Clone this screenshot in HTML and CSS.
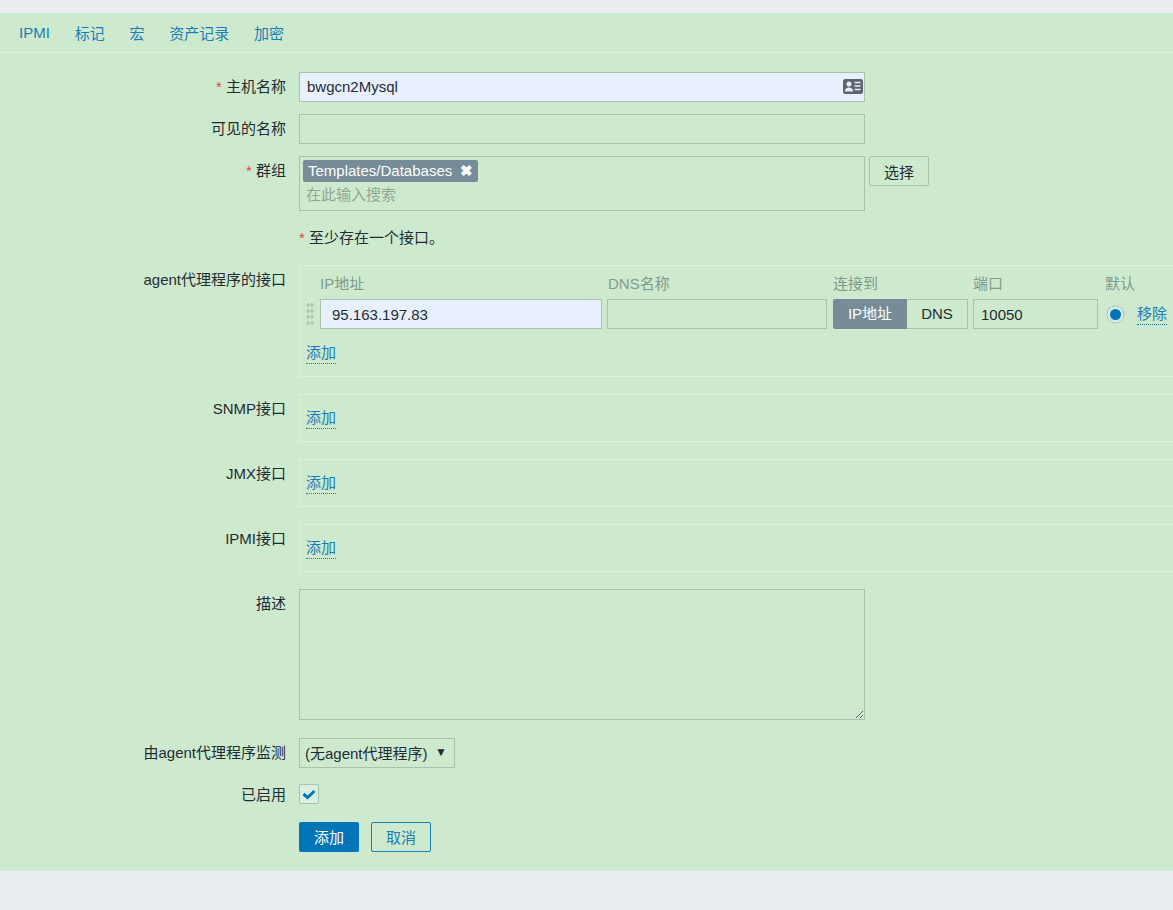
FILE: index.html
```html
<!DOCTYPE html>
<html lang="en">
<head>
  <meta charset="UTF-8">
  <title>Host</title>
  <link rel="stylesheet" href="styles.css">
</head>
<body>
<div class="panel">
  <ul class="tabs">
    <li><a href="#">IPMI</a></li>
    <li><a href="#">标记</a></li>
    <li><a href="#">宏</a></li>
    <li><a href="#">资产记录</a></li>
    <li><a href="#">加密</a></li>
  </ul>
  <form class="form">
    <div class="row">
      <label class="lbl"><span class="req">*</span> 主机名称</label>
      <div class="field-wrap">
        <input class="txt filled wide" type="text" value="bwgcn2Mysql">
        <svg class="card-icon" width="20" height="15" viewBox="0 0 20 15">
          <rect width="20" height="15" rx="2.5" fill="#5c6470"/>
          <circle cx="6" cy="5" r="2.5" fill="#e8effd"/>
          <path d="M2 12.5c0-3 1.500-4 4-4s4 1 4 4z" fill="#e8effd"/>
          <path d="M11.500 3.500h6M11.500 7h6M11.500 10.500h6" stroke="#e8effd" stroke-width="1.600"/>
        </svg>
      </div>
    </div>
    <div class="row">
      <label class="lbl">可见的名称</label>
      <input class="txt wide" type="text">
    </div>
    <div class="row">
      <label class="lbl"><span class="req">*</span> 群组</label>
      <div class="multi">
        <span class="tag">Templates/Databases <b class="tag-x">✖</b></span>
        <span class="placeholder">在此输入搜索</span>
      </div>
      <button class="btn-grey" type="button">选择</button>
    </div>
    <div class="row row-note">
      <label class="lbl"></label>
      <div class="note"><span class="req">*</span> 至少存在一个接口。</div>
    </div>
    <div class="row row-iface">
      <label class="lbl">agent代理程序的接口</label>
      <div class="box box-agent">
        <div class="iface-head">
          <span class="col-ip">IP地址</span>
          <span class="col-dns">DNS名称</span>
          <span class="col-conn">连接到</span>
          <span class="col-port">端口</span>
          <span>默认</span>
        </div>
        <div class="iface-row">
          <span class="grip"></span>
          <input class="txt filled ip" type="text" value="95.163.197.83">
          <input class="txt dns" type="text">
          <div class="seg"><span class="seg-on">IP地址</span><span class="seg-off">DNS</span></div>
          <input class="txt port" type="text" value="10050">
          <span class="radio"></span>
          <a class="dotted" href="#">移除</a>
        </div>
        <a class="dotted add" href="#">添加</a>
      </div>
    </div>
    <div class="row row-iface">
      <label class="lbl">SNMP接口</label>
      <div class="box"><a class="dotted" href="#">添加</a></div>
    </div>
    <div class="row row-iface">
      <label class="lbl">JMX接口</label>
      <div class="box"><a class="dotted" href="#">添加</a></div>
    </div>
    <div class="row row-iface">
      <label class="lbl">IPMI接口</label>
      <div class="box"><a class="dotted" href="#">添加</a></div>
    </div>
    <div class="row row-desc">
      <label class="lbl">描述</label>
      <textarea class="txt area"></textarea>
    </div>
    <div class="row row-proxy">
      <label class="lbl">由agent代理程序监测</label>
      <div class="select">(无agent代理程序)<span class="arrow">▼</span></div>
    </div>
    <div class="row row-check">
      <label class="lbl">已启用</label>
      <span class="check">
        <svg width="14" height="11" viewBox="0 0 14 11"><path d="M1.500 5l4 3.500 7-6.500" fill="none" stroke="#0275b8" stroke-width="3"/></svg>
      </span>
    </div>
    <div class="row row-btns">
      <label class="lbl"></label>
      <button class="btn-main" type="button">添加</button>
      <button class="btn-alt" type="button">取消</button>
    </div>
  </form>
</div>
</body>
</html>
```
FILE: styles.css
```css
*{
  box-sizing: border-box;
}
html, body{
  margin: 0;
  padding: 0;
  overflow: hidden;
}
body{
  height: 910px;
  background-color: #ebeef0;
  padding-top: 13px;
  font-family: "Liberation Sans", "Noto Sans CJK SC", sans-serif;
  font-size: 15px;
  color: #1f2c33;
}
a{
  color: #1b7db5;
  text-decoration: none;
}
.panel{
  height: 858px;
  background-color: #cdeacf;
}
.tabs{
  display: flex;
  gap: 24.8px;
  height: 40px;
  margin: 0;
  padding: 0 19px;
  list-style: none;
  align-items: center;
  border-bottom: 1px solid #ddf0df;
}
.form{
  padding-top: 19px;
}
.row{
  display: flex;
  align-items: flex-start;
  margin-bottom: 12px;
}
.lbl{
  width: 286px;
  flex: none;
  margin-right: 13px;
  padding-top: 3px;
  text-align: right;
}
.req{
  color: #e0483f;
}
.txt{
  height: 30px;
  padding: 0 7px 2px;
  border: 1px solid #a9c2ae;
  background-color: #cdeacf;
  font: inherit;
  color: #1f2c33;
  outline: none;
}
.filled{
  background-color: #e8f0fe;
}
.wide{
  width: 566px;
}
.field-wrap{
  position: relative;
  display: flex;
}
.card-icon{
  position: absolute;
  right: 2px;
  top: 7px;
}
.multi{
  display: flex;
  flex-direction: column;
  align-items: flex-start;
  width: 566px;
  height: 55px;
  padding: 3px 3px;
  border: 1px solid #a9c2ae;
}
.tag{
  height: 22px;
  padding: 0 5px;
  line-height: 22px;
  border-radius: 2px;
  background-color: #768d99;
  color: #fff;
}
.tag-x{
  margin-left: 4px;
  font-size: 15px;
}
.placeholder{
  margin: 1px 0 0 3px;
  color: #93a593;
}
.btn-grey{
  width: 60px;
  height: 30px;
  margin-left: 4px;
  border: 1px solid #a9c2ae;
  border-radius: 2px;
  background-color: #cdeacf;
  font: inherit;
  color: #1f2c33;
}
.row-note{
  margin-top: 15px;
  margin-bottom: 15px;
}
.row-note .lbl{
  padding-top: 0;
}
.note{
  line-height: 24px;
}
.row-iface{
  margin-bottom: 17px;
}
.box{
  width: 900px;
  height: 48px;
  flex: none;
  padding: 13px 6px 0;
  border: 1px solid #ddf0df;
}
.box-agent{
  height: 112px;
  padding-top: 5px;
}
.dotted{
  display: inline-block;
  line-height: 20px;
  border-bottom: 1px dotted #1b7db5;
}
.iface-head{
  display: flex;
  height: 22px;
  padding-left: 14px;
  align-items: center;
  color: #7f9a8c;
}
.col-ip{
  width: 288px;
}
.col-dns{
  width: 225px;
}
.col-conn{
  width: 140px;
}
.col-port{
  width: 132px;
}
.iface-row{
  display: flex;
  align-items: center;
  height: 30px;
  margin-top: 6px;
}
.grip{
  width: 8px;
  height: 24px;
  margin-right: 6px;
  background-image: radial-gradient(#b0c9b6 1.500px, transparent 1.600px);
  background-size: 4px 6px;
}
.ip{
  width: 282px;
  padding: 0 0 0 11px;
}
.dns{
  width: 220px;
  margin-left: 5px;
}
.seg{
  display: flex;
  height: 30px;
  margin-left: 6px;
  line-height: 28px;
}
.seg-on{
  width: 74px;
  text-align: center;
  line-height: 30px;
  background-color: #768d99;
  border-radius: 2px 0 0 2px;
  color: #fff;
}
.seg-off{
  width: 61px;
  text-align: center;
  border: 1px solid #a9c2ae;
  border-left: 0;
}
.port{
  width: 125px;
  margin-left: 5px;
  padding-bottom: 0;
}
.radio{
  width: 19px;
  height: 19px;
  margin-left: 8px;
  margin-right: 12px;
  border: 1px solid #d8dfc9;
  border-radius: 50%;
  background-color: #0275b8;
  box-shadow: inset 0 0 0 3px #d6eae6;
}
.add{
  margin-top: 14px;
}
.row-desc{
  margin-bottom: 18px;
}
.area{
  display: block;
  width: 566px;
  height: 131px;
}
.select{
  display: flex;
  justify-content: space-between;
  width: 156px;
  height: 30px;
  padding: 0 7px 0 5px;
  line-height: 30px;
  border: 1px solid #a9c2ae;
}
.arrow{
  font-size: 12px;
  line-height: 27px;
}
.row-proxy{
  margin-bottom: 15px;
}
.row-check .lbl{
  padding-top: 0;
  line-height: 24px;
}
.row-check{
  margin-bottom: 15px;
}
.check{
  display: flex;
  align-items: center;
  justify-content: center;
  width: 20px;
  height: 20px;
  margin-top: 1px;
  border: 1px solid #a9c2ae;
  border-radius: 2px;
  background-color: #dcefe3;
}
.btn-main, .btn-alt{
  width: 60px;
  height: 30px;
  padding: 0 0 2px;
  border-radius: 2px;
  font: inherit;
}
.btn-main{
  border: 0;
  background-color: #0275b8;
  color: #fff;
}
.btn-alt{
  margin-left: 12px;
  border: 1px solid #1b7db5;
  background-color: #cdeacf;
  color: #1b7db5;
}
```
